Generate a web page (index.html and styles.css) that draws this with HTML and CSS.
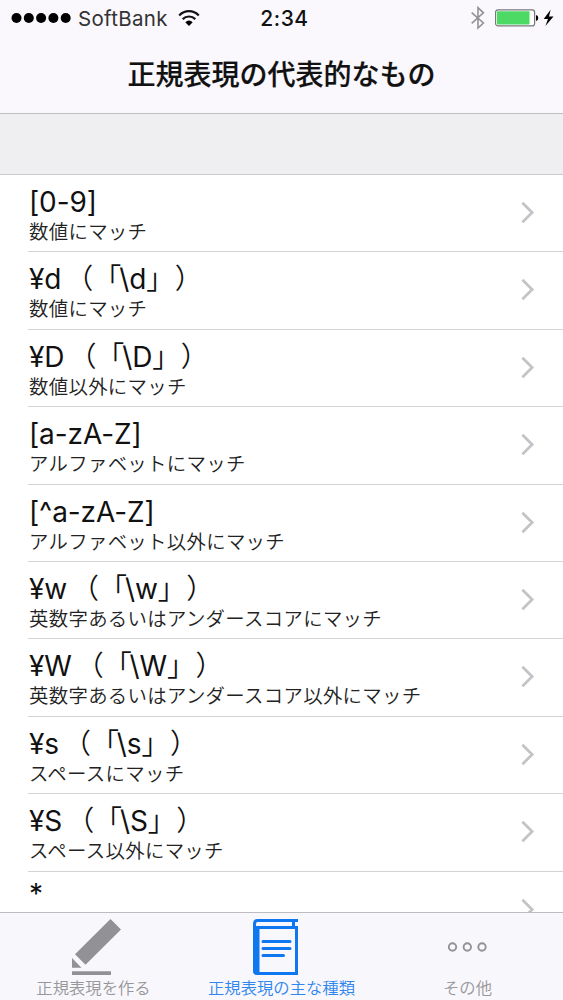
FILE: index.html
```html
<!DOCTYPE html>
<html lang="ja">
<head>
<meta charset="utf-8">
<title>正規表現の代表的なもの</title>
<link rel="stylesheet" href="styles.css">
</head>
<body>
<div class="screen">
  <header class="top">
    <div class="status">
      <div class="status-left">
        <svg class="signal" width="61" height="12" viewBox="0 0 61 12"><circle cx="5.5" cy="6" r="5"/><circle cx="17.8" cy="6" r="5"/><circle cx="30.1" cy="6" r="5"/><circle cx="42.4" cy="6" r="5"/><circle cx="54.7" cy="6" r="5"/></svg>
        <span class="carrier">SoftBank</span>
        <svg class="wifi" width="22" height="16" viewBox="0 0 22 16"><path d="M1.2 5.4C6.7-.2 15.3-.2 20.8 5.4M4.7 9.1C8.2 5.6 13.8 5.6 17.3 9.1" fill="none" stroke="#111" stroke-width="2.2"/><path d="M7.3 12.2Q11 9 14.7 12.2L11 16Z"/></svg>
      </div>
      <span class="time">2:34</span>
      <div class="status-right">
        <svg width="14" height="24" viewBox="0 0 14 24"><path d="M.7 6.6 12.4 17 7 22V1.6L12.4 6.8.7 17.4" fill="none" stroke="#929196" stroke-width="1.6"/></svg>
        <svg class="battery" width="44" height="18" viewBox="0 0 44 18"><rect x=".6" y=".9" width="39" height="16" rx="2.5" fill="#fff" stroke="#77767b" stroke-width="1.2"/><rect x="2" y="2.3" width="32.5" height="13.2" rx="1" fill="#4cd964"/><path d="M41 6Q43.3 6.5 43.3 9T41 12Z"/></svg>
        <svg class="bolt" width="11" height="18" viewBox="0 0 11 18"><path d="M7.6.8.7 10H5L2.4 17 10.5 7.4H6Z"/></svg>
      </div>
    </div>
    <h1 class="heading">正規表現の代表的なもの</h1>
  </header>
  <div class="section-gap"></div>
  <main class="list">
    <div class="row"><div class="cell"><div class="name">[0-9]</div><div class="note">数値にマッチ</div></div><svg class="chevron" viewBox="0 0 14 24"><path d="M1.5 1.5 12 12 1.5 22.5"/></svg></div>
    <div class="row"><div class="cell"><div class="name">¥d<span class="open">（「</span>\d<span class="close">」）</span></div><div class="note">数値にマッチ</div></div><svg class="chevron" viewBox="0 0 14 24"><path d="M1.5 1.5 12 12 1.5 22.5"/></svg></div>
    <div class="row"><div class="cell"><div class="name">¥D<span class="open">（「</span>\D<span class="close">」）</span></div><div class="note">数値以外にマッチ</div></div><svg class="chevron" viewBox="0 0 14 24"><path d="M1.5 1.5 12 12 1.5 22.5"/></svg></div>
    <div class="row"><div class="cell"><div class="name">[a-zA-Z]</div><div class="note">アルファベットにマッチ</div></div><svg class="chevron" viewBox="0 0 14 24"><path d="M1.5 1.5 12 12 1.5 22.5"/></svg></div>
    <div class="row"><div class="cell"><div class="name">[^a-zA-Z]</div><div class="note">アルファベット以外にマッチ</div></div><svg class="chevron" viewBox="0 0 14 24"><path d="M1.5 1.5 12 12 1.5 22.5"/></svg></div>
    <div class="row"><div class="cell"><div class="name">¥w<span class="open">（「</span>\w<span class="close">」）</span></div><div class="note">英数字あるいはアンダースコアにマッチ</div></div><svg class="chevron" viewBox="0 0 14 24"><path d="M1.5 1.5 12 12 1.5 22.5"/></svg></div>
    <div class="row"><div class="cell"><div class="name">¥W<span class="open">（「</span>\W<span class="close">」）</span></div><div class="note">英数字あるいはアンダースコア以外にマッチ</div></div><svg class="chevron" viewBox="0 0 14 24"><path d="M1.5 1.5 12 12 1.5 22.5"/></svg></div>
    <div class="row"><div class="cell"><div class="name">¥s<span class="open">（「</span>\s<span class="close">」）</span></div><div class="note">スペースにマッチ</div></div><svg class="chevron" viewBox="0 0 14 24"><path d="M1.5 1.5 12 12 1.5 22.5"/></svg></div>
    <div class="row"><div class="cell"><div class="name">¥S<span class="open">（「</span>\S<span class="close">」）</span></div><div class="note">スペース以外にマッチ</div></div><svg class="chevron" viewBox="0 0 14 24"><path d="M1.5 1.5 12 12 1.5 22.5"/></svg></div>
    <div class="row"><div class="cell"><div class="name star">*</div></div><svg class="chevron" viewBox="0 0 14 24"><path d="M1.5 1.5 12 12 1.5 22.5"/></svg></div>
  </main>
  <nav class="tabs">
    <div class="tab">
      <svg class="pencil" width="48" height="60" viewBox="2 0 48 60" fill="#929195"><path d="M40.5 2 51 12.5 15.5 47.8 5 37.3ZM2 41 11.5 50.7H2ZM2 54.3H41V58H2Z"/></svg>
      <span class="label">正規表現を作る</span>
    </div>
    <div class="tab active">
      <svg class="book" width="52" height="60" viewBox="0 0 52 60" fill="none" stroke="#0f78f0" stroke-width="3"><path d="M48 3.5H7.5Q4.5 3.5 4.5 7V10.5H46.5V56.5H7Q4.5 56.5 4.5 54V7M43.5 3.5V10"/><path d="M5 11H9V56H6Z" fill="#0f78f0" stroke-width="1"/><path d="M13 24.5H40M13 31.5H40M13 38.5H33.5" stroke-linecap="round"/></svg>
      <span class="label">正規表現の主な種類</span>
    </div>
    <div class="tab">
      <svg width="52" height="60" viewBox="0 0 52 60" fill="none" stroke="#929195" stroke-width="1.9"><circle cx="10.5" cy="30" r="3.7"/><circle cx="25.3" cy="30" r="3.7"/><circle cx="40" cy="30" r="3.7"/></svg>
      <span class="label">その他</span>
    </div>
  </nav>
</div>
</body>
</html>
```

FILE: styles.css
```css
* { box-sizing: border-box; }
body { margin: 0; }
svg { display: block; flex: none; overflow: visible; }
.screen {
  width: 563px;
  height: 1000px;
  display: flex;
  flex-direction: column;
  overflow: hidden;
  background: #fff;
  color: #111;
  font-family: Inter, "Noto Sans CJK JP", sans-serif;
  text-spacing-trim: space-all;
}
.top {
  flex: none;
  height: 114px;
  background: #faf8fc;
  border-bottom: 1px solid #bfbec2;
}
.status {
  height: 36px;
  display: grid;
  grid-template-columns: 1fr auto 1fr;
  align-items: center;
  padding: 0 9px 0 11px;
}
.status-left, .status-right { display: flex; align-items: center; }
.status-right { justify-content: flex-end; }
.status-right > :first-child { margin-right: 1px; transform: translateX(1px); }
.carrier { margin-left: 6px; font-size: 20.5px; letter-spacing: .3px; color: #333; }
.wifi { margin-left: 10px; margin-top: -1px; }
.time { font-size: 21px; font-weight: 500; letter-spacing: .5px; padding-left: 4px; }
.battery { margin-left: 10px; }
.bolt { margin-left: 4px; }
.heading {
  margin: 0;
  height: 77px;
  line-height: 78px;
  text-align: center;
  font-size: 28px;
  font-weight: 500;
  -webkit-text-stroke: .2px #111;
}
.section-gap {
  flex: none;
  height: 61px;
  background: #efeef1;
  border-bottom: 1px solid #cac9cd;
}
.list { flex: 1; min-height: 0; overflow: hidden; }
.row {
  height: 77.4px;
  margin-left: 28px;
  padding-right: 29px;
  display: flex;
  justify-content: space-between;
  align-items: flex-start;
  border-bottom: 1px solid #d3d2d6;
}
.cell { padding: 10px 0 0 1px; white-space: nowrap; }
.name { height: 33px; line-height: 34px; font-size: 28px; letter-spacing: -.1px; }
.open, .close { font-weight: 350; }
.open { margin-left: 4px; margin-right: -2px; }
.close { letter-spacing: .5px; }
.star { line-height: 24px; height: 30px; }
.note { height: 28px; line-height: 29px; font-size: 19.4px; font-weight: 350; letter-spacing: .32px; color: #222; }
.chevron { width: 13px; height: 23px; margin-top: 26px; fill: none; stroke: #c4c4c8; stroke-width: 3; }
.tabs {
  flex: none;
  height: 88px;
  display: grid;
  grid-template-columns: 187px 189px 1fr;
  padding-right: 4px;
  background: #f8f7fb;
  border-top: 1px solid #bdbcc0;
}
.tab { display: flex; flex-direction: column; align-items: center; padding-top: 4px; color: #97969a; }
.tab.active { color: #2f86ee; }
.pencil { margin-left: 5px; }
.book { margin-right: 12px; }
.label { height: 20px; line-height: 22px; font-size: 16.35px; font-weight: 350; white-space: nowrap; }
```
